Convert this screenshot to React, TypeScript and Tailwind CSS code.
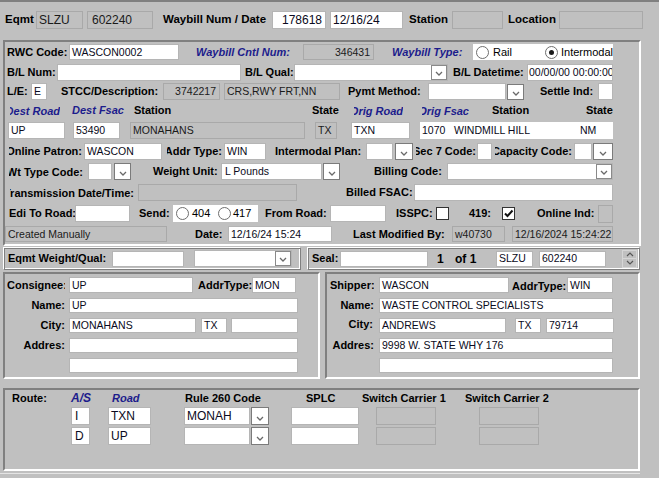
import clsx from "clsx";
import { twMerge } from "tailwind-merge";

const cx = (...a: any[]) => twMerge(clsx(a));

const inset = "border-2 border-t-[#808080] border-l-[#808080] border-b-white border-r-white";
const ridge =
  "border border-t-white border-l-white border-b-[#808080] border-r-[#808080] shadow-[inset_1px_1px_0_#808080,inset_-1px_-1px_0_#ffffff]";

function L({ t, c, blue }: { t: string; c?: string; blue?: boolean }) {
  return (
    <span
      className={cx(
        "shrink-0 whitespace-nowrap text-[11px] font-bold leading-none text-black",
        blue && "italic text-[#1c1c8c]",
        c
      )}
    >
      {t}
    </span>
  );
}

// right aligned label; overflow is clipped on the left side
function RL({ t, c, blue }: { t: string; c?: string; blue?: boolean }) {
  return (
    <div
      className={cx(
        "flex shrink-0 justify-end overflow-hidden whitespace-nowrap text-[11px] font-bold leading-[14px] text-black",
        blue && "italic text-[#1c1c8c]",
        c
      )}
    >
      <span className="shrink-0">{t}</span>
    </div>
  );
}

function F({ v, c, dis, r }: { v?: string; c?: string; dis?: boolean; r?: boolean }) {
  return (
    <div
      className={cx(
        "flex h-[17px] shrink-0 items-center overflow-hidden whitespace-nowrap border px-[2px] text-[10.5px] leading-none",
        dis ? "border-[#a9a9a9] bg-[#c0c0c0] text-[#1a1a1a]" : "border-[#b5b5b5] bg-white text-[#0a0a20]",
        r && "justify-end pr-[3px]",
        c
      )}
    >
      {v}
    </div>
  );
}

function Arrow({ c }: { c?: string }) {
  return (
    <div
      className={cx(
        "flex h-[17px] w-[17px] shrink-0 items-end justify-center border border-[#7b7b7b] bg-white pb-[3px]",
        c
      )}
    >
      <svg width="8" height="5" viewBox="0 0 8 5">
        <path d="M1 1 L4 4 L7 1" fill="none" stroke="#6a6a6a" strokeWidth="1.3" />
      </svg>
    </div>
  );
}

function SelIn({ v, c }: { v?: string; c?: string }) {
  return (
    <div
      className={cx(
        "flex h-[17px] shrink-0 items-center justify-between border border-[#b5b5b5] bg-white pl-[2px] text-[10.5px] leading-none text-[#0a0a20]",
        c
      )}
    >
      <span className="whitespace-nowrap">{v}</span>
      <Arrow c="h-[15px] w-[16px] border-[#8a8a8a]" />
    </div>
  );
}

function Radio({ on, c }: { on?: boolean; c?: string }) {
  return (
    <div
      className={cx(
        "flex h-[13px] w-[13px] shrink-0 items-center justify-center rounded-full border border-[#6e6e6e] bg-white",
        c
      )}
    >
      {on && <div className="h-[5px] w-[5px] rounded-full bg-[#1a1a1a]" />}
    </div>
  );
}

function Check({ on }: { on?: boolean }) {
  return (
    <div className="flex h-[13px] w-[13px] shrink-0 items-center justify-center border border-[#333] bg-white">
      {on && (
        <svg width="11" height="11" viewBox="0 0 11 11">
          <path d="M2 5.5 L4.5 8 L9.5 2.5" fill="none" stroke="#111" strokeWidth="2" />
        </svg>
      )}
    </div>
  );
}

function Spinner() {
  return (
    <div className="ml-[16px] flex h-[18px] w-[15px] shrink-0 flex-col border border-[#d6d6d6]">
      <div className="flex h-[8px] items-center justify-center border-b border-[#d6d6d6]">
        <svg width="8" height="5" viewBox="0 0 8 5">
          <path d="M1 4 L4 1 L7 4" fill="none" stroke="#555" strokeWidth="1.2" />
        </svg>
      </div>
      <div className="flex flex-1 items-center justify-center">
        <svg width="8" height="5" viewBox="0 0 8 5">
          <path d="M1 1 L4 4 L7 1" fill="none" stroke="#555" strokeWidth="1.2" />
        </svg>
      </div>
    </div>
  );
}

function Header() {
  return (
    <div className="mt-[8px] flex h-[19px] items-center">
      <L t="Eqmt" c="ml-[5px] w-[31px] text-[11.5px]" />
      <F dis v="SLZU" c="h-[18px] w-[47px] text-[12px]" />
      <F dis v="602240" c="ml-[4px] h-[18px] w-[66px] pl-[4px] text-[12px]" />
      <L t="Waybill Num / Date" c="ml-[10px] w-[109px] text-[11.5px]" />
      <F r v="178618" c="h-[18px] w-[54px] text-[12px]" />
      <F v="12/16/24" c="ml-[4px] h-[18px] w-[73px] text-[12px]" />
      <L t="Station" c="ml-[6px] w-[43px] text-[11.5px]" />
      <F dis c="h-[18px] w-[51px]" />
      <L t="Location" c="ml-[5px] w-[51px] text-[11.5px]" />
      <F dis c="h-[18px] w-[84px]" />
    </div>
  );
}

function MainPanel() {
  return (
    <div className={cx("ml-[3px] mt-[11px] w-[638px]", inset)}>
      {/* row 1 */}
      <div className="flex h-[20px] items-center">
        <L t="RWC Code:" c="ml-[2px] w-[62px]" />
        <F v="WASCON0002" c="h-[16px] w-[110px]" />
        <L blue t="Waybill Cntl Num:" c="ml-[17px] w-[107px]" />
        <F dis r v="346431" c="h-[16px] w-[71px]" />
        <L blue t="Waybill Type:" c="ml-[18px] w-[81px]" />
        <div className="flex h-[16px] w-[140px] shrink-0 items-center bg-white text-[11px] leading-none">
          <div className="flex w-[70px] items-center gap-[4px] pl-[3px]">
            <Radio />
            <span>Rail</span>
          </div>
          <div className="flex items-center gap-[3px] pl-[3px]">
            <Radio on />
            <span>Intermodal</span>
          </div>
        </div>
      </div>
      {/* row 2 */}
      <div className="flex h-[20px] items-center">
        <L t="B/L Num:" c="ml-[2px] w-[50px]" />
        <F c="w-[184px]" />
        <L t="B/L Qual:" c="ml-[4px] w-[49px]" />
        <SelIn c="w-[154px]" />
        <L t="B/L Datetime:" c="ml-[5px] w-[74px]" />
        <F v="00/00/00 00:00:00" c="w-[86px] px-[1px]" />
      </div>
      {/* row 3 */}
      <div className="flex h-[19px] items-center">
        <L t="L/E:" c="ml-[2px] w-[24px]" />
        <F v="E" c="w-[16px]" />
        <L t="STCC/Description:" c="ml-[14px] w-[102px]" />
        <F dis r v="3742217" c="w-[57px]" />
        <F dis v="CRS,RWY FRT,NN" c="ml-[4px] w-[116px]" />
        <L t="Pymt Method:" c="ml-[8px] w-[80px]" />
        <F c="w-[78px]" />
        <Arrow c="ml-[1px] h-[16px]" />
        <L t="Settle Ind:" c="ml-[16px] w-[58px]" />
        <F c="w-[15px]" />
      </div>
      {/* row 4 : column labels */}
      <div className="flex h-[19px] items-center">
        <RL blue t="Dest Road" c="ml-[5px] w-[50px]" />
        <L blue t="Dest Fsac" c="ml-[12px] w-[62px]" />
        <L t="Station" c="w-[178px]" />
        <L t="State" c="w-[39px]" />
        <RL blue t="Orig Road" c="ml-[3px] w-[49px]" />
        <RL blue t="Orig Fsac" c="ml-[19px] w-[47px]" />
        <L t="Station" c="ml-[23px] w-[94px]" />
        <L t="State" />
      </div>
      {/* row 5 */}
      <div className="flex h-[21px] items-center">
        <F v="UP" c="ml-[3px] w-[57px]" />
        <F v="53490" c="ml-[8px] w-[47px]" />
        <F dis v="MONAHANS" c="ml-[10px] w-[175px]" />
        <F dis v="TX" c="ml-[10px] w-[22px]" />
        <F v="TXN" c="ml-[14px] w-[59px]" />
        <div className="ml-[10px] flex h-[17px] w-[193px] shrink-0 items-center bg-white pl-[2px] text-[10.5px] leading-none text-[#0a0a20]">
          <span className="w-[32px]">1070</span>
          <span className="w-[126px]">WINDMILL HILL</span>
          <span>NM</span>
        </div>
      </div>
      {/* row 6 */}
      <div className="flex h-[20px] items-center">
        <RL t="Online Patron:" c="ml-[4px] w-[73px]" />
        <F v="WASCON" c="ml-[2px] w-[78px]" />
        <RL t="Addr Type:" c="ml-[5px] w-[55px]" />
        <F v="WIN" c="ml-[2px] w-[42px]" />
        <L t="Intermodal Plan:" c="ml-[9px] w-[91px]" />
        <F c="w-[27px]" />
        <Arrow c="ml-[2px] w-[18px]" />
        <RL t="Sec 7 Code:" c="ml-[3px] w-[60px]" />
        <F c="ml-[1px] w-[15px]" />
        <RL t="Capacity Code:" c="ml-[3px] w-[77px]" />
        <F c="ml-[2px] w-[18px]" />
        <Arrow c="ml-[1px] w-[20px]" />
      </div>
      {/* row 7 */}
      <div className="flex h-[21px] items-center">
        <RL t="Wt Type Code:" c="ml-[4px] w-[74px]" />
        <F c="ml-[5px] w-[24px]" />
        <Arrow c="ml-[2px]" />
        <L t="Weight Unit:" c="ml-[22px] w-[68px]" />
        <F v="L Pounds" c="w-[101px] pl-[3px]" />
        <Arrow c="ml-[1px]" />
        <L t="Billing Code:" c="ml-[34px] w-[73px]" />
        <SelIn c="w-[166px]" />
      </div>
      {/* row 8 */}
      <div className="flex h-[21px] items-center">
        <RL t="Transmission Date/Time:" c="ml-[5px] w-[124px]" />
        <F dis c="ml-[4px] w-[159px]" />
        <L t="Billed FSAC:" c="ml-[49px] w-[68px]" />
        <F c="w-[199px]" />
      </div>
      {/* row 9 */}
      <div className="flex h-[21px] items-center">
        <L t="Edi To Road:" c="ml-[4px] w-[66px]" />
        <F c="w-[55px]" />
        <L t="Send:" c="ml-[9px] w-[34px]" />
        <div className="flex h-[17px] w-[85px] shrink-0 items-center bg-white text-[11px] leading-none">
          <Radio c="ml-[3px]" />
          <span className="ml-[3px] w-[26px]">404</span>
          <Radio />
          <span className="ml-[2px]">417</span>
        </div>
        <L t="From Road:" c="ml-[7px] w-[65px]" />
        <F c="w-[56px]" />
        <L t="ISSPC:" c="ml-[10px] w-[40px]" />
        <Check />
        <L t="419:" c="ml-[20px] w-[33px]" />
        <Check on />
        <L t="Online Ind:" c="ml-[22px] w-[61px]" />
        <F dis c="h-[18px] w-[15px]" />
      </div>
      {/* row 10 */}
      <div className="flex h-[20px] items-center">
        <F dis v="Created Manually" c="h-[16px] w-[162px]" />
        <L t="Date:" c="ml-[28px] w-[33px]" />
        <F v="12/16/24 15:24" c="h-[16px] w-[104px]" />
        <L t="Last Modified By:" c="ml-[21px] w-[99px]" />
        <F dis v="w40730" c="h-[16px] w-[53px]" />
        <F dis v="12/16/2024 15:24:22" c="ml-[7px] h-[16px] w-[101px]" />
      </div>
    </div>
  );
}

function WeightSeal() {
  return (
    <div className="mt-[1px] flex">
      <div className={cx("ml-[3px] flex h-[23px] w-[298px] items-center", ridge)}>
        <L t="Eqmt Weight/Qual:" c="ml-[4px] w-[104px]" />
        <F c="h-[16px] w-[72px]" />
        <SelIn c="ml-[10px] w-[98px]" />
      </div>
      <div className={cx("ml-[6px] flex h-[23px] w-[333px] items-center", ridge)}>
        <L t="Seal:" c="ml-[4px] w-[28px]" />
        <F c="h-[16px] w-[88px]" />
        <L t="1" c="ml-[9px] w-[18px] text-[12px]" />
        <L t="of 1" c="w-[41px] text-[12px]" />
        <F v="SLZU" c="h-[16px] w-[37px]" />
        <F v="602240" c="ml-[6px] h-[16px] w-[67px]" />
        <Spinner />
      </div>
    </div>
  );
}

function Parties() {
  return (
    <div className="mt-[2px] flex">
      <div className={cx("ml-[3px] h-[107px] w-[317px] pt-[1px]", inset)}>
        <div className="flex h-[20px] items-center">
          <div className="ml-[2px] w-[58px] shrink-0 overflow-hidden whitespace-nowrap text-[11px] font-bold leading-[14px]">
            Consignee:
          </div>
          <F v="UP" c="ml-[4px] h-[16px] w-[124px]" />
          <L t="AddrType:" c="ml-[5px] w-[54px]" />
          <F v="MON" c="h-[16px] w-[44px]" />
        </div>
        <div className="flex h-[20px] items-center">
          <RL t="Name:" c="w-[60px]" />
          <F v="UP" c="ml-[4px] h-[15px] w-[229px]" />
        </div>
        <div className="flex h-[20px] items-center">
          <RL t="City:" c="w-[60px]" />
          <F v="MONAHANS" c="ml-[4px] h-[15px] w-[127px]" />
          <F v="TX" c="ml-[5px] h-[15px] w-[26px]" />
          <F c="ml-[4px] h-[15px] w-[67px]" />
        </div>
        <div className="flex h-[20px] items-center">
          <RL t="Addres:" c="w-[60px]" />
          <F c="ml-[4px] h-[15px] w-[229px]" />
        </div>
        <div className="flex h-[20px] items-center">
          <F c="ml-[64px] h-[15px] w-[229px]" />
        </div>
      </div>
      <div className={cx("ml-[5px] h-[107px] w-[315px] pt-[1px]", inset)}>
        <div className="flex h-[20px] items-center">
          <div className="ml-[3px] w-[44px] shrink-0 overflow-hidden whitespace-nowrap text-[11px] font-bold leading-[14px]">
            Shipper:
          </div>
          <F v="WASCON" c="ml-[5px] h-[16px] w-[130px]" />
          <L t="AddrType:" c="ml-[3px] mt-[2px] w-[55px]" />
          <F v="WIN" c="h-[16px] w-[46px]" />
        </div>
        <div className="flex h-[20px] items-center">
          <RL t="Name:" c="w-[47px]" />
          <F v="WASTE CONTROL SPECIALISTS" c="ml-[5px] h-[15px] w-[234px]" />
        </div>
        <div className="flex h-[20px] items-center">
          <RL t="City:" c="mb-[2px] w-[46px]" />
          <F v="ANDREWS" c="ml-[6px] h-[15px] w-[127px]" />
          <F v="TX" c="ml-[9px] h-[15px] w-[26px]" />
          <F v="79714" c="ml-[5px] h-[15px] w-[68px]" />
        </div>
        <div className="flex h-[20px] items-center">
          <RL t="Addres:" c="w-[47px]" />
          <F v="9998 W. STATE WHY 176" c="ml-[5px] h-[15px] w-[234px]" />
        </div>
        <div className="flex h-[20px] items-center">
          <F c="ml-[52px] h-[15px] w-[234px]" />
        </div>
      </div>
    </div>
  );
}

function RoutePanel() {
  return (
    <div className={cx("ml-[3px] mt-[9px] h-[83px] w-[637px]", inset)}>
      <div className="flex h-[16px] items-center">
        <L t="Route:" c="ml-[7px] w-[59px]" />
        <L blue t="A/S" c="w-[41px] text-[12px]" />
        <L blue t="Road" c="w-[73px]" />
        <L t="Rule 260 Code" c="w-[121px]" />
        <L t="SPLC" c="w-[56px]" />
        <L t="Switch Carrier 1" c="w-[103px]" />
        <L t="Switch Carrier 2" />
      </div>
      {[
        { as: "I", road: "TXN", rule: "MONAH" },
        { as: "D", road: "UP", rule: "" },
      ].map((r) => (
        <div key={r.as} className="flex h-[20px] items-center">
          <F v={r.as} c="ml-[66px] h-[18px] w-[19px] pl-[3px] text-[12px]" />
          <F v={r.road} c="ml-[18px] h-[18px] w-[43px] text-[12px]" />
          <F v={r.rule} c="ml-[33px] h-[18px] w-[66px] text-[12px]" />
          <Arrow c="ml-[1px] h-[18px] w-[18px]" />
          <F c="ml-[22px] h-[18px] w-[68px]" />
          <F dis c="ml-[17px] h-[18px] w-[60px]" />
          <F dis c="ml-[43px] h-[18px] w-[60px]" />
        </div>
      ))}
    </div>
  );
}

export default function App() {
  return (
    <div className="h-[478px] w-[659px] overflow-hidden border-t-2 border-t-[#808080] bg-[#c0c0c0] font-['Liberation_Sans',Arial,sans-serif]">
      <Header />
      <MainPanel />
      <WeightSeal />
      <Parties />
      <RoutePanel />
      <div className="mt-[2px] h-[1px] w-[640px] bg-[#e4e4e4]" />
    </div>
  );
}
